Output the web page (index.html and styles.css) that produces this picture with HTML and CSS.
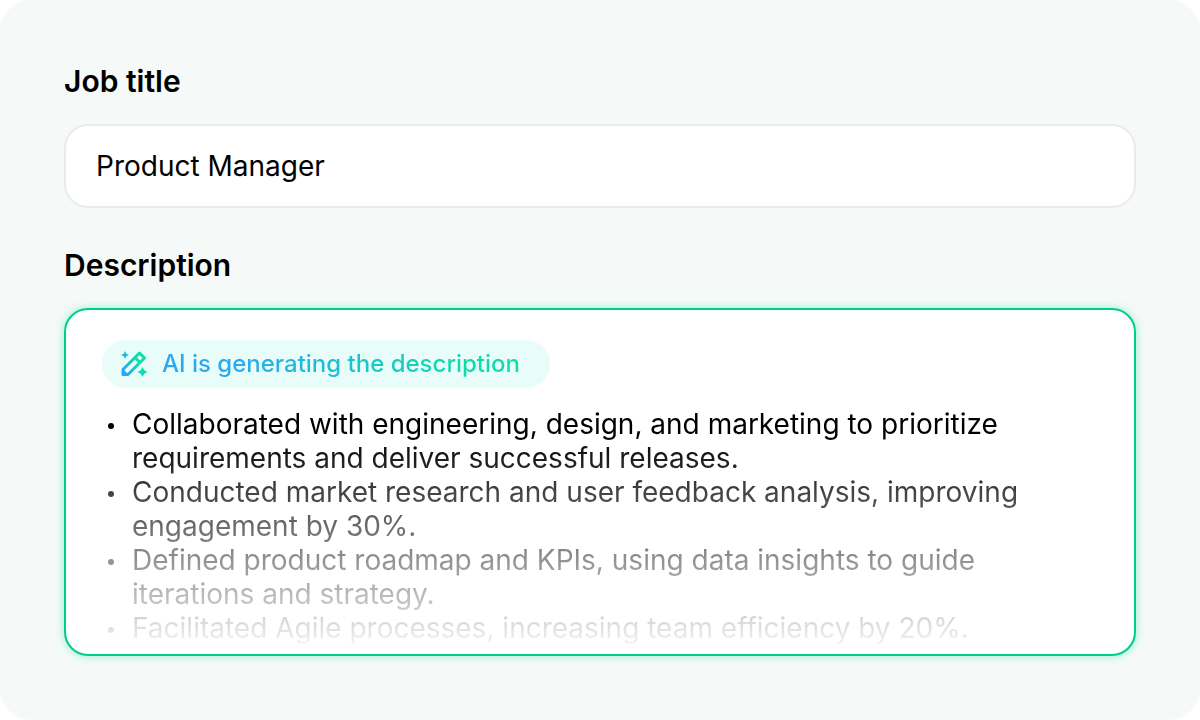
FILE: index.html
```html
<!DOCTYPE html>
<html lang="en">
<head>
    <meta charset="UTF-8">
    <meta name="viewport" content="width=device-width, initial-scale=1.0">
    <title>Job description</title>
    <link rel="stylesheet" href="styles.css">
</head>
<body>

<form class="card">
    <div class="form-group">
        <label for="job-title">Job title</label>
        <input type="text" id="job-title" value="Product Manager">
    </div>
    <div class="form-group">
        <label id="description-label">Description</label>
        <div class="editor" role="textbox" aria-multiline="true" aria-labelledby="description-label" tabindex="0">
            <div class="badge">
                <svg class="badge-icon" viewBox="0 0 28 28" fill="none" aria-hidden="true">
                    <defs>
                        <linearGradient id="pen" x1="2" y1="20" x2="22" y2="8" gradientUnits="userSpaceOnUse">
                            <stop offset="0.1" stop-color="#2aa9f0"/>
                            <stop offset="0.75" stop-color="#0fdcab"/>
                        </linearGradient>
                    </defs>
                    <path d="M3 24.500V19.500L19.500 3L24.500 8L8 24.500ZM15 7.500L20 12.500" stroke="url(#pen)" stroke-width="3" stroke-linejoin="round"/>
                    <path d="M3 19L8.500 24.500H3Z" fill="#2aa9f0"/>
                    <path d="M5 1L6.200 3.800L9 5L6.200 6.200L5 9L3.800 6.200L1 5L3.800 3.800Z" fill="#22b7dc"/>
                    <path d="M22.500 17L24.200 20.300L27.500 22L24.200 23.700L22.500 27L20.800 23.700L17.500 22L20.800 20.300Z" fill="#0fdcab"/>
                </svg>
                <span class="badge-text">AI is generating the description</span>
            </div>
            <ul class="points">
                <li>Collaborated with engineering, design, and marketing to prioritize requirements and deliver successful releases.</li>
                <li>Conducted market research and user feedback analysis, improving engagement by 30%.</li>
                <li>Defined product roadmap and KPIs, using data insights to guide iterations and strategy.</li>
                <li>Facilitated Agile processes, increasing team efficiency by 20%.</li>
            </ul>
        </div>
    </div>
</form>

</body>
</html>
```
FILE: styles.css
```css
* {
    box-sizing: border-box;
}
body {
    font-family: Inter, "Liberation Sans", sans-serif;
    background-color: #fff;
    color: #000;
    margin: 0;
}
.card {
    display: flex;
    flex-direction: column;
    gap: 40px;
    min-height: 100vh;
    padding: 64px;
    background-color: #f5f9f8;
    border-radius: 32px;
}
.form-group {
    display: flex;
    flex-direction: column;
    gap: 26px;
}
.form-group label {
    font-size: 30px;
    font-weight: 600;
    line-height: 34px;
}
.form-group input {
    width: 100%;
    height: 84px;
    padding: 0 30px;
    border: 2px solid #ebebeb;
    border-radius: 24px;
    background-color: #fff;
    color: #000;
    font-family: inherit;
    font-size: 28px;
}
.editor {
    padding: 30px 36px 0;
    border: 2px solid #00cc8e;
    border-radius: 24px;
    background-color: #fff;
    box-shadow: 0 0 8px rgba(0, 230, 160, 0.4);
}
.badge {
    display: flex;
    align-items: center;
    gap: 14px;
    width: fit-content;
    height: 48px;
    padding: 0 30px 0 18px;
    border-radius: 24px;
    background-color: #e8fdfa;
}
.badge-icon {
    width: 28px;
    height: 28px;
}
.badge-text {
    font-size: 24px;
    font-weight: 500;
    line-height: 28px;
    background: linear-gradient(90deg, #2aa9f0 20%, #0fdcab 85%);
    -webkit-background-clip: text;
    background-clip: text;
    color: transparent;
}
.points {
    margin: 19px 0 0;
    padding: 0 60px 9px 30px;
    list-style: none;
    font-size: 28px;
    line-height: 34px;
    -webkit-mask-image: linear-gradient(#000 28px, transparent);
    mask-image: linear-gradient(#000 28px, transparent);
}
.points li::before {
    content: "";
    float: left;
    width: 6px;
    height: 6px;
    margin: 16px 0 0 -24px;
    border-radius: 50%;
    background-color: #000;
}
```
